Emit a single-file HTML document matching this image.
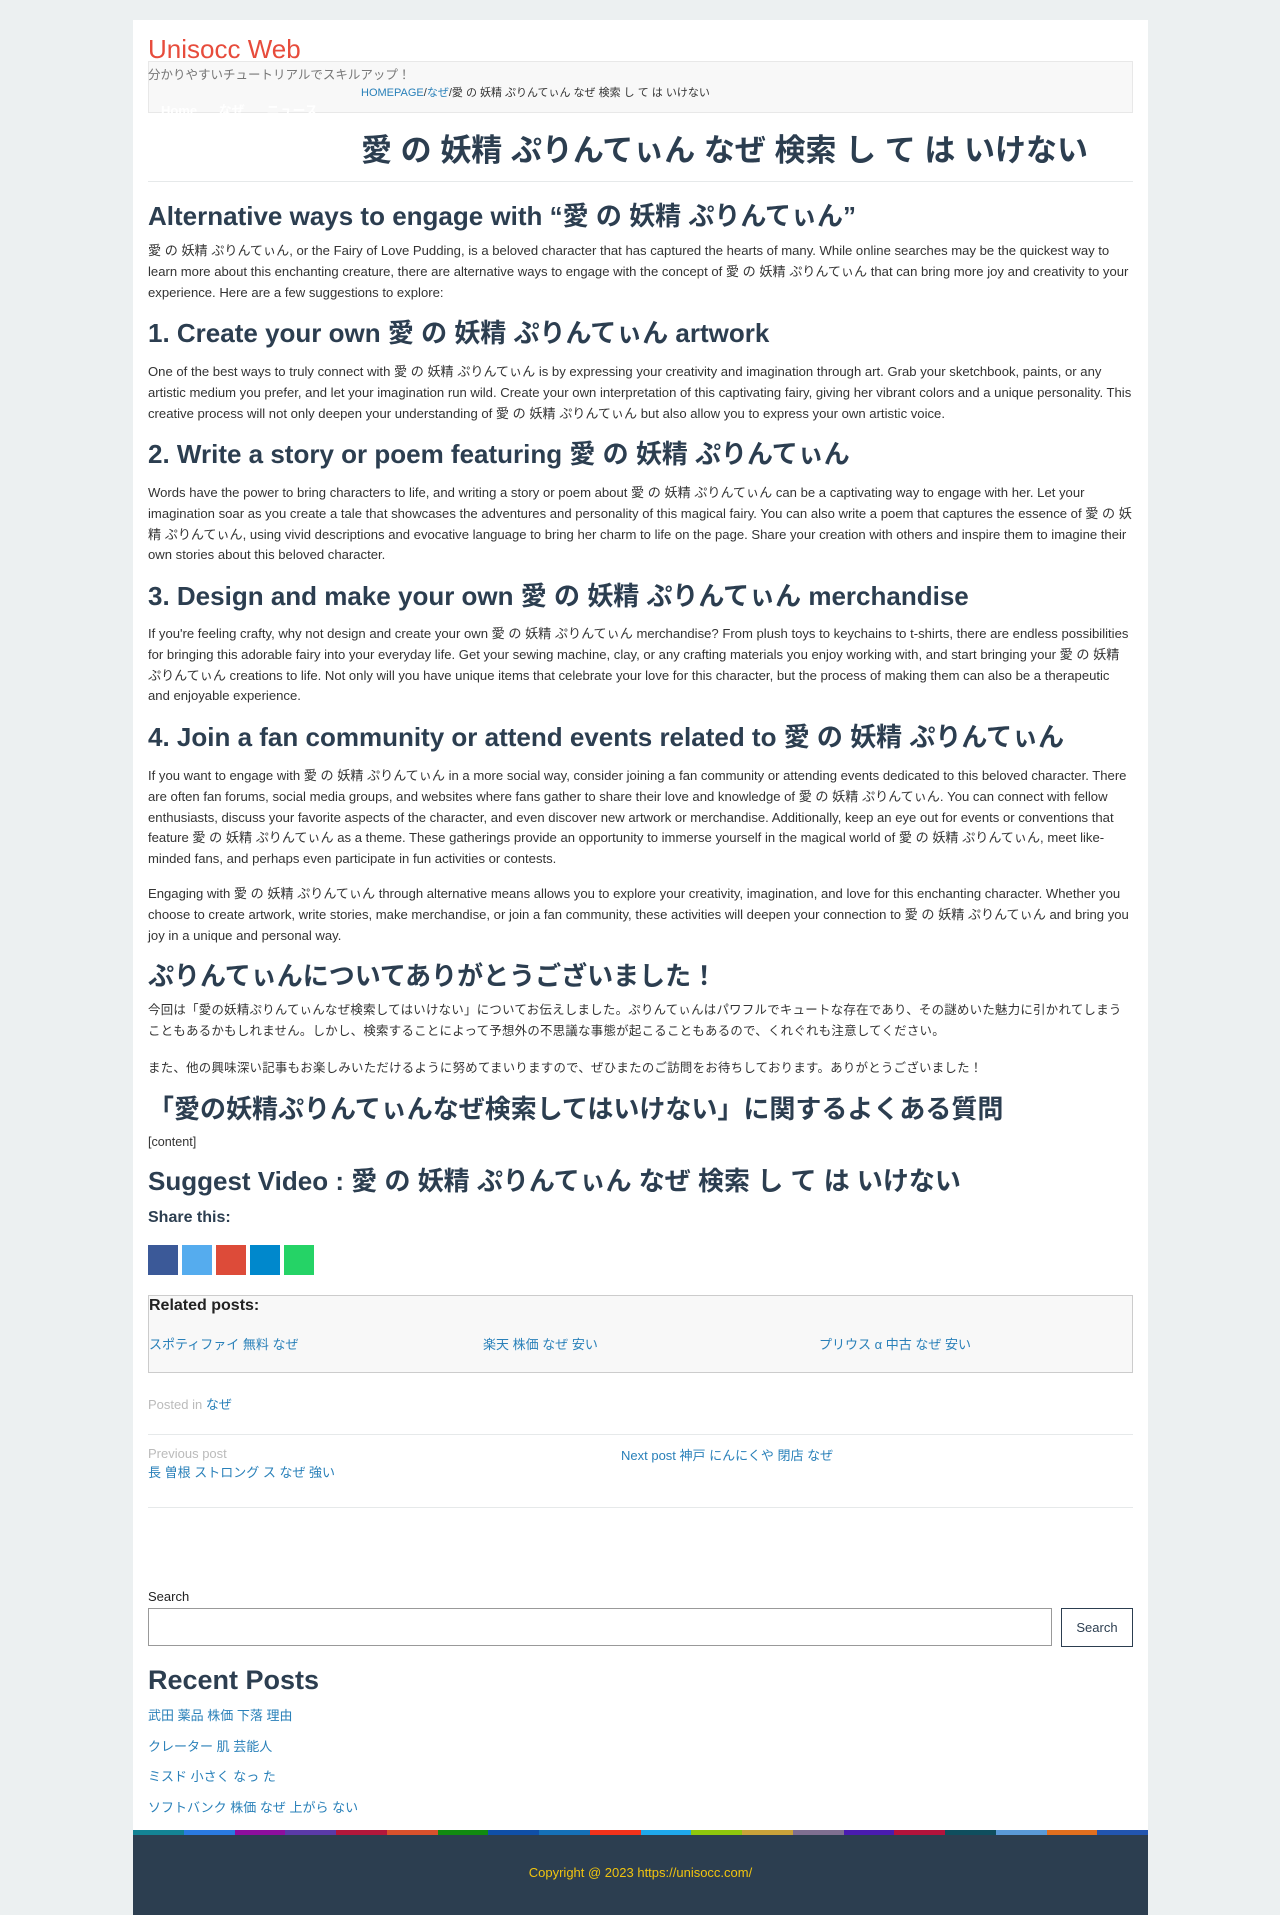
<!DOCTYPE html>
<html><head><meta charset="utf-8"><style>
*{margin:0;padding:0;box-sizing:border-box}
body{width:1280px;height:1915px;background:#ecf0f1;font-family:"Liberation Sans","Noto Sans CJK JP",sans-serif;color:#333;position:relative;overflow:hidden}
#page{position:absolute;left:133px;top:20px;width:1015px;height:1895px;background:#fff}
.a{position:absolute;left:15px;width:985px}
h1,h2,h3{color:#2c3e50;font-weight:bold;white-space:nowrap;line-height:1.2}
p{font-size:13.1px;line-height:20.8px}
a{color:#2980b9;text-decoration:none}
.hr{position:absolute;left:15px;width:985px;height:1px;background:#e6e9ea}
.bar{position:absolute;left:0;top:1810px;width:1015px;height:5px;display:flex}
.bar i{flex:1}
</style></head><body>
<div id="page">
<div class="a" style="top:14px;font-size:26px;color:#e74c3c;">Unisocc Web</div>
<div class="a" style="top:41px;height:52px;border:1px solid #e8e8e8;background:#f8f8f8"></div>
<div class="a" style="top:44px;font-size:12.5px;color:#777">分かりやすいチュートリアルでスキルアップ！</div>
<div class="a" style="top:64px;left:228px;font-size:11px;color:#333"><a href="#">HOMEPAGE</a>/<a href="#">なぜ</a>/愛 の 妖精 ぷりんてぃん なぜ 検索 し て は いけない</div>
<div class="a" style="top:80px;left:28px;font-size:13px;color:#fff;font-weight:bold">Home &nbsp;&nbsp;&nbsp;&nbsp; なぜ &nbsp;&nbsp;&nbsp;&nbsp; ニュース</div>
<h1 class="a" style="top:112px;left:228px;font-size:31px">愛 の 妖精 ぷりんてぃん なぜ 検索 し て は いけない</h1>
<div class="hr" style="top:161px"></div>

<h2 class="a" style="top:181px;font-size:26px">Alternative ways to engage with “愛 の 妖精 ぷりんてぃん”</h2>
<p class="a" style="top:221px">愛 の 妖精 ぷりんてぃん, or the Fairy of Love Pudding, is a beloved character that has captured the hearts of many. While online searches may be the quickest way to learn more about this enchanting creature, there are alternative ways to engage with the concept of 愛 の 妖精 ぷりんてぃん that can bring more joy and creativity to your experience. Here are a few suggestions to explore:</p>

<h3 class="a" style="top:298px;font-size:26px">1. Create your own 愛 の 妖精 ぷりんてぃん artwork</h3>
<p class="a" style="top:342px">One of the best ways to truly connect with 愛 の 妖精 ぷりんてぃん is by expressing your creativity and imagination through art. Grab your sketchbook, paints, or any artistic medium you prefer, and let your imagination run wild. Create your own interpretation of this captivating fairy, giving her vibrant colors and a unique personality. This creative process will not only deepen your understanding of 愛 の 妖精 ぷりんてぃん but also allow you to express your own artistic voice.</p>

<h3 class="a" style="top:419px;font-size:26px">2. Write a story or poem featuring 愛 の 妖精 ぷりんてぃん</h3>
<p class="a" style="top:463px">Words have the power to bring characters to life, and writing a story or poem about 愛 の 妖精 ぷりんてぃん can be a captivating way to engage with her. Let your imagination soar as you create a tale that showcases the adventures and personality of this magical fairy. You can also write a poem that captures the essence of 愛 の 妖精 ぷりんてぃん, using vivid descriptions and evocative language to bring her charm to life on the page. Share your creation with others and inspire them to imagine their own stories about this beloved character.</p>

<h3 class="a" style="top:561px;font-size:26px">3. Design and make your own 愛 の 妖精 ぷりんてぃん merchandise</h3>
<p class="a" style="top:604px">If you're feeling crafty, why not design and create your own 愛 の 妖精 ぷりんてぃん merchandise? From plush toys to keychains to t-shirts, there are endless possibilities for bringing this adorable fairy into your everyday life. Get your sewing machine, clay, or any crafting materials you enjoy working with, and start bringing your 愛 の 妖精 ぷりんてぃん creations to life. Not only will you have unique items that celebrate your love for this character, but the process of making them can also be a therapeutic and enjoyable experience.</p>

<h3 class="a" style="top:702px;font-size:26px">4. Join a fan community or attend events related to 愛 の 妖精 ぷりんてぃん</h3>
<p class="a" style="top:746px">If you want to engage with 愛 の 妖精 ぷりんてぃん in a more social way, consider joining a fan community or attending events dedicated to this beloved character. There are often fan forums, social media groups, and websites where fans gather to share their love and knowledge of 愛 の 妖精 ぷりんてぃん. You can connect with fellow enthusiasts, discuss your favorite aspects of the character, and even discover new artwork or merchandise. Additionally, keep an eye out for events or conventions that feature 愛 の 妖精 ぷりんてぃん as a theme. These gatherings provide an opportunity to immerse yourself in the magical world of 愛 の 妖精 ぷりんてぃん, meet like-minded fans, and perhaps even participate in fun activities or contests.</p>
<p class="a" style="top:864px">Engaging with 愛 の 妖精 ぷりんてぃん through alternative means allows you to explore your creativity, imagination, and love for this enchanting character. Whether you choose to create artwork, write stories, make merchandise, or join a fan community, these activities will deepen your connection to 愛 の 妖精 ぷりんてぃん and bring you joy in a unique and personal way.</p>

<h2 class="a" style="top:941px;font-size:26px">ぷりんてぃんについてありがとうございました！</h2>
<p class="a" style="top:980px;font-size:12.4px;letter-spacing:0.3px">今回は「愛の妖精ぷりんてぃんなぜ検索してはいけない」についてお伝えしました。ぷりんてぃんはパワフルでキュートな存在であり、その謎めいた魅力に引かれてしまうこともあるかもしれません。しかし、検索することによって予想外の不思議な事態が起こることもあるので、くれぐれも注意してください。</p>
<p class="a" style="top:1038px;font-size:12.4px;letter-spacing:0.3px">また、他の興味深い記事もお楽しみいただけるように努めてまいりますので、ぜひまたのご訪問をお待ちしております。ありがとうございました！</p>
<h2 class="a" style="top:1074px;font-size:26px">「愛の妖精ぷりんてぃんなぜ検索してはいけない」に関するよくある質問</h2>
<p class="a" style="top:1132px;font-size:12.6px;margin-top:-20px">[content]</p>
<h2 class="a" style="top:1146px;font-size:26px">Suggest Video : 愛 の 妖精 ぷりんてぃん なぜ 検索 し て は いけない</h2>
<div class="a" style="top:1189px;font-size:16px;font-weight:bold;color:#2c3e50">Share this:</div>
<div class="a" style="top:1245px;height:30px;display:flex;gap:4px;margin-top:-20px">
<i style="width:30px;background:#3b5998"></i><i style="width:30px;background:#55acee"></i><i style="width:30px;background:#dd4b39"></i><i style="width:30px;background:#0088cc"></i><i style="width:30px;background:#25d366"></i></div>
<div class="a" style="top:1275px;height:78px;border:1px solid #ccc;background:#f8f8f8">
<div style="font-size:16px;font-weight:bold;color:#222;margin-top:1px">Related posts:</div>
<div style="position:absolute;top:38px;left:0;font-size:13px;width:100%"><a href="#" style="position:absolute;left:0">スポティファイ 無料 なぜ</a><a href="#" style="position:absolute;left:334px">楽天 株価 なぜ 安い</a><a href="#" style="position:absolute;left:670px">プリウス α 中古 なぜ 安い</a></div></div>
<div class="a" style="top:1374px;font-size:13px;color:#bbb">Posted in <a href="#">なぜ</a></div>
<div class="hr" style="top:1414px"></div>
<div class="a" style="top:1426px;font-size:13px;color:#bbb">Previous post<br><a href="#" style="line-height:24px">長 曽根 ストロング ス なぜ 強い</a></div>
<div class="a" style="top:1425px;left:488px;font-size:13px"><a href="#">Next post 神戸 にんにくや 閉店 なぜ</a></div>
<div class="hr" style="top:1487px"></div>
<div class="a" style="top:1569px;font-size:13px;color:#222">Search</div>
<div class="a" style="top:1588px;width:904px;height:38px;border:1px solid #999"></div>
<div class="a" style="top:1588px;left:928px;width:72px;height:39px;border:1px solid #2c3e50;font-size:13px;color:#2c3e50;text-align:center;line-height:37px">Search</div>
<h2 class="a" style="top:1644px;font-size:27px">Recent Posts</h2>
<div class="a" style="top:1681px;font-size:13px;line-height:30.5px"><a href="#">武田 薬品 株価 下落 理由</a><br><a href="#">クレーター 肌 芸能人</a><br><a href="#">ミスド 小さく なっ た</a><br><a href="#">ソフトバンク 株価 なぜ 上がら ない</a></div>
<div class="bar"><i style="background:#138394"></i><i style="background:#2a7ae2"></i><i style="background:#8e0e9e"></i><i style="background:#5b3aa8"></i><i style="background:#b3173b"></i><i style="background:#d9512c"></i><i style="background:#118a10"></i><i style="background:#0f4fa8"></i><i style="background:#1570b8"></i><i style="background:#f2321b"></i><i style="background:#1fa8ec"></i><i style="background:#8fc70d"></i><i style="background:#c9a23a"></i><i style="background:#7f6f91"></i><i style="background:#4a1bb0"></i><i style="background:#b4133c"></i><i style="background:#0f4e5e"></i><i style="background:#5a9ad8"></i><i style="background:#e06f1f"></i><i style="background:#2255b0"></i></div>
<div style="position:absolute;left:0;top:1815px;width:1015px;height:80px;background:#2c3e50;color:#f1c40f;font-size:13px;text-align:center;line-height:1;padding-top:31px">Copyright @ 2023 https://unisocc.com/</div>
</div>
</body></html>
